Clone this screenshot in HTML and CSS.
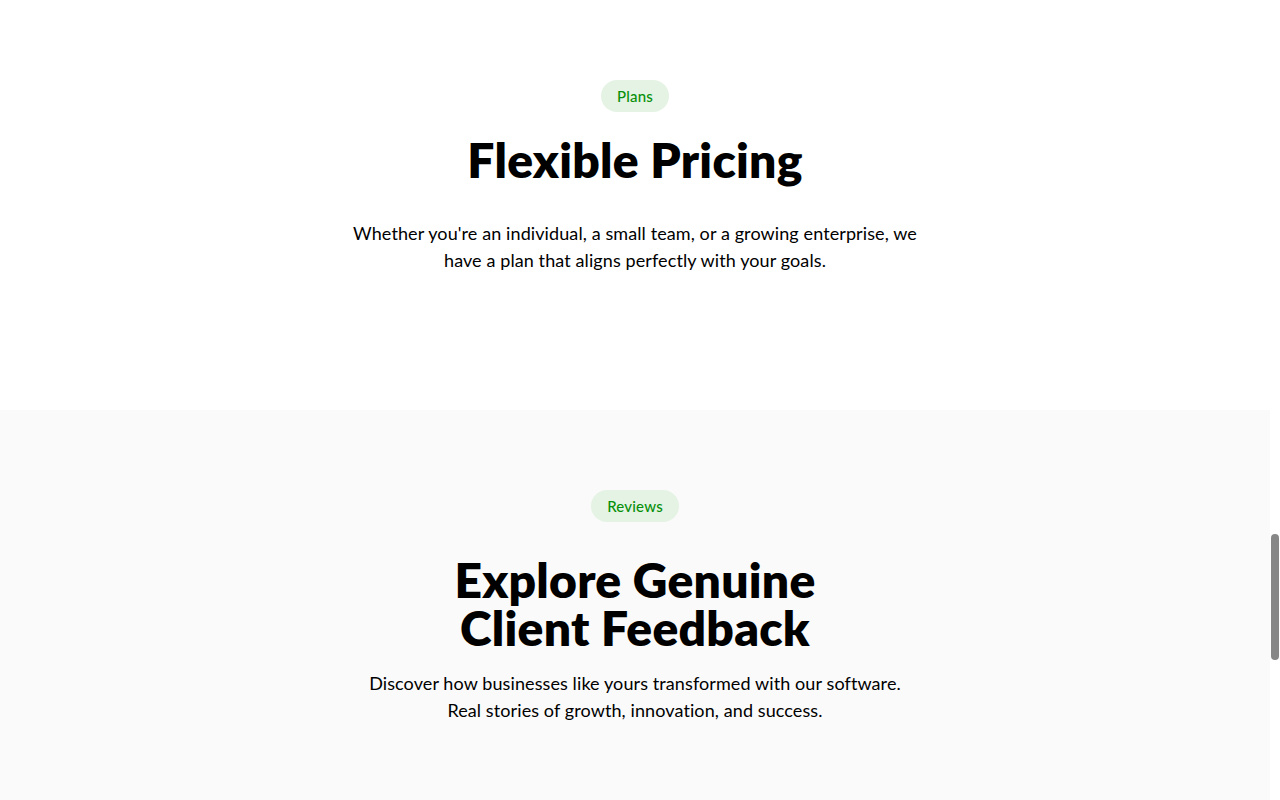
FILE: index.html
```html
<!DOCTYPE html>
<html lang="en">
<head>
<meta charset="utf-8">
<title>Flexible Pricing</title>
<link rel="stylesheet" href="styles.css">
</head>
<body>
<main class="page">
  <section class="section section-plans">
    <span class="badge">Plans</span>
    <h2 class="title title-plans">Flexible Pricing</h2>
    <p class="lead lead-plans">Whether you're an individual, a small team, or a growing enterprise, we have a plan that aligns perfectly with your goals.</p>
  </section>
  <section class="section section-reviews">
    <span class="badge">Reviews</span>
    <h2 class="title title-reviews"><span class="title-line">Explore Genuine</span><span class="title-line">Client Feedback</span></h2>
    <p class="lead lead-reviews">Discover how businesses like yours transformed with our software. Real stories of growth, innovation, and success.</p>
  </section>
</main>
<div class="scroll-track"><div class="scroll-thumb"></div></div>
</body>
</html>
```
FILE: styles.css
```css
html, body {
  margin: 0;
  padding: 0;
  height: 100%;
  overflow: hidden;
  background: #ffffff;
}
body {
  font-family: "Lato", "Noto Sans", sans-serif;
  color: #000;
}
.page {
  display: flex;
  flex-direction: column;
  width: calc(100% - 10px);
}
.section {
  display: flex;
  flex-direction: column;
  align-items: center;
  text-align: center;
  box-sizing: border-box;
}
.section-plans {
  height: 410px;
  padding-top: 80px;
  background: #ffffff;
}
.section-reviews {
  height: 500px;
  padding-top: 80px;
  background: #fafafa;
}
.badge {
  display: inline-flex;
  align-items: center;
  height: 32px;
  padding: 0 16px;
  border-radius: 16px;
  background: #e4f3e4;
  color: #08900a;
  font-size: 15px;
  font-weight: 500;
  letter-spacing: 0.2px;
  box-sizing: border-box;
}
.title {
  margin: 0;
  font-size: 48px;
  line-height: 1;
  font-weight: 800;
  letter-spacing: 0.25px;
  display: flex;
  flex-direction: column;
  align-items: center;
}
.title-line {
  display: block;
  height: 48px;
}
.title-plans {
  margin-top: 24px;
}
.title-reviews {
  margin-top: 34px;
}
.lead {
  margin: 0;
  font-size: 18px;
  line-height: 27px;
  letter-spacing: 0.1px;
}
.lead-plans {
  max-width: 580px;
  margin-top: 36px;
}
.lead-reviews {
  max-width: 545px;
  margin-top: 18px;
}
.scroll-track {
  position: fixed;
  top: 0;
  right: 0;
  width: 10px;
  height: 100%;
  background: transparent;
}
.scroll-thumb {
  position: absolute;
  right: 1px;
  top: 534px;
  width: 8px;
  height: 126px;
  border-radius: 4px;
  background: #878787;
}
```
